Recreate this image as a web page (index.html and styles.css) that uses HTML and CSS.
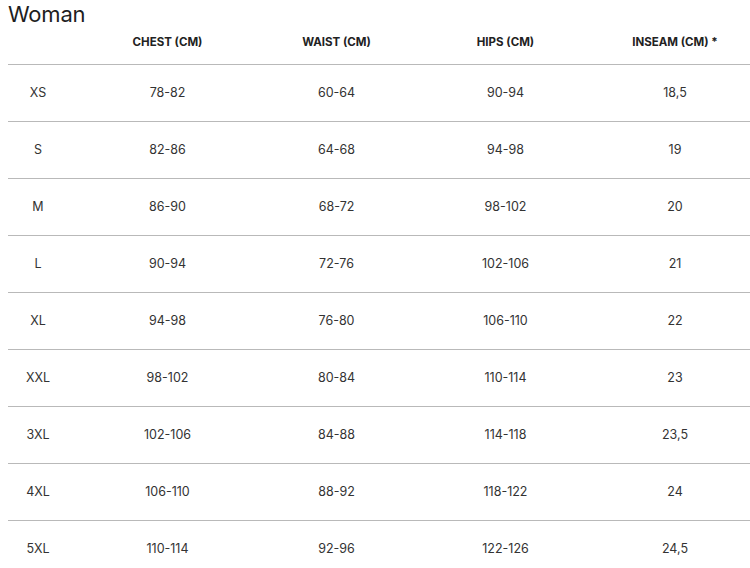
FILE: index.html
```html
<!DOCTYPE html>
<html lang="en">
<head>
<meta charset="utf-8">
<title>Size chart - Woman</title>
<link rel="stylesheet" href="styles.css">
</head>
<body>
<h1 class="title">Woman</h1>
<div class="table">
  <div class="row head">
    <div class="cell size"></div>
    <div class="cell">CHEST (CM)</div>
    <div class="cell">WAIST (CM)</div>
    <div class="cell">HIPS (CM)</div>
    <div class="cell last">INSEAM (CM) *</div>
  </div>
  <div class="row"><div class="cell size">XS</div><div class="cell">78-82</div><div class="cell">60-64</div><div class="cell">90-94</div><div class="cell last">18,5</div></div>
  <div class="row"><div class="cell size">S</div><div class="cell">82-86</div><div class="cell">64-68</div><div class="cell">94-98</div><div class="cell last">19</div></div>
  <div class="row"><div class="cell size">M</div><div class="cell">86-90</div><div class="cell">68-72</div><div class="cell">98-102</div><div class="cell last">20</div></div>
  <div class="row"><div class="cell size">L</div><div class="cell">90-94</div><div class="cell">72-76</div><div class="cell">102-106</div><div class="cell last">21</div></div>
  <div class="row"><div class="cell size">XL</div><div class="cell">94-98</div><div class="cell">76-80</div><div class="cell">106-110</div><div class="cell last">22</div></div>
  <div class="row"><div class="cell size">XXL</div><div class="cell">98-102</div><div class="cell">80-84</div><div class="cell">110-114</div><div class="cell last">23</div></div>
  <div class="row"><div class="cell size">3XL</div><div class="cell">102-106</div><div class="cell">84-88</div><div class="cell">114-118</div><div class="cell last">23,5</div></div>
  <div class="row"><div class="cell size">4XL</div><div class="cell">106-110</div><div class="cell">88-92</div><div class="cell">118-122</div><div class="cell last">24</div></div>
  <div class="row"><div class="cell size">5XL</div><div class="cell">110-114</div><div class="cell">92-96</div><div class="cell">122-126</div><div class="cell last">24,5</div></div>
</div>
</body>
</html>
```
FILE: styles.css
```css
html, body {
  background: #ffffff;
}
body {
  margin: 0 0 0 8px;
  overflow: hidden;
  font-family: Inter, "Liberation Sans", Arial, sans-serif;
  color: #333333;
}
.title {
  margin: 0;
  padding-top: 1px;
  font-size: 22px;
  line-height: 26px;
  font-weight: 400;
  color: #1e1e1e;
  letter-spacing: -0.2px;
}
.table {
  display: flex;
  flex-direction: column;
}
.row {
  display: grid;
  grid-template-columns: 75px 169px 169px 169px 1fr;
  align-items: center;
  height: 57px;
  box-sizing: border-box;
  border-top: 1px solid #b9b9b9;
  font-size: 12.5px;
  line-height: 14px;
}
.row.head {
  border-top: none;
  height: 37px;
  padding-bottom: 8px;
  font-size: 11.5px;
  font-weight: 700;
  color: #222222;
}
.cell {
  text-align: center;
}
.cell.size {
  padding-right: 15px;
}
.cell.last {
  padding-left: 10px;
}
```
